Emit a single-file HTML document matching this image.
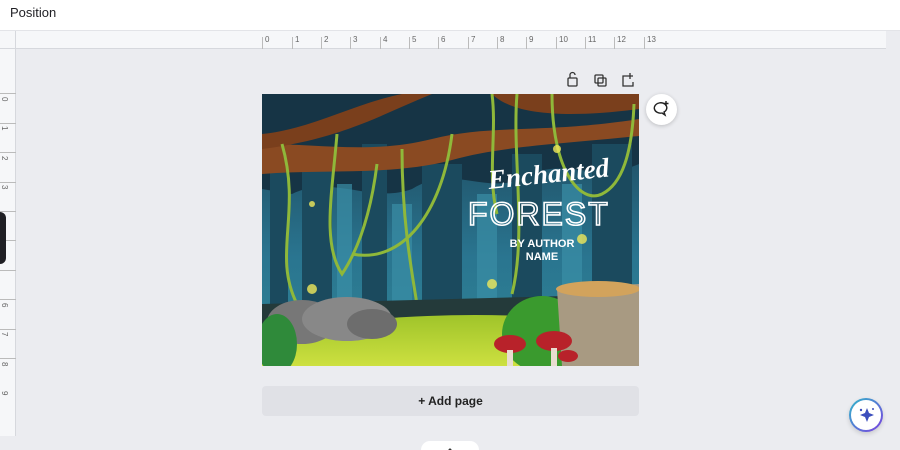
<!DOCTYPE html>
<html style="width:900px;height:450px;overflow:hidden"><head><style>
*{margin:0;padding:0;box-sizing:border-box}
body{width:900px;height:450px;overflow:hidden;background:#ebecf0;font-family:"Liberation Sans",sans-serif;position:relative}
.top{position:absolute;left:0;top:0;width:900px;height:31px;background:#fff;border-bottom:1px solid #e3e4e8}
.top span{position:absolute;left:10px;top:5px;font-size:13px;color:#1f1f24}
.rt{position:absolute;left:0;top:31px;width:886px;height:18px;background:#f6f7f9;border-bottom:1px solid #d6d8dd}
.rl{position:absolute;left:0;top:49px;width:16px;height:387px;background:#f6f7f9;border-right:1px solid #d6d8dd}
.btn{position:absolute;left:262px;top:386px;width:377px;height:30px;background:#e0e1e6;border-radius:4px;font-size:12px;color:#222;text-align:center;line-height:30px;font-weight:bold}
</style></head><body>
<div class="top"><span>Position</span></div>
<div class="rt">
<div style="position:absolute;left:0;top:0;width:16px;height:18px;border-right:1px solid #d6d8dd"></div>
<svg width="900" height="18" style="position:absolute;left:0;top:0">
<g stroke="#bbb" stroke-width="1">
<line x1="262.5" y1="6" x2="262.5" y2="18"/><line x1="292.5" y1="6" x2="292.5" y2="18"/><line x1="321.5" y1="6" x2="321.5" y2="18"/><line x1="350.5" y1="6" x2="350.5" y2="18"/><line x1="380.5" y1="6" x2="380.5" y2="18"/><line x1="409.5" y1="6" x2="409.5" y2="18"/><line x1="438.5" y1="6" x2="438.5" y2="18"/><line x1="468.5" y1="6" x2="468.5" y2="18"/><line x1="497.5" y1="6" x2="497.5" y2="18"/><line x1="526.5" y1="6" x2="526.5" y2="18"/><line x1="556.5" y1="6" x2="556.5" y2="18"/><line x1="585.5" y1="6" x2="585.5" y2="18"/><line x1="614.5" y1="6" x2="614.5" y2="18"/><line x1="644.5" y1="6" x2="644.5" y2="18"/>
</g>
<g fill="#666" font-size="8" font-family="Liberation Sans">
<text x="265" y="11">0</text><text x="295" y="11">1</text><text x="324" y="11">2</text><text x="353" y="11">3</text><text x="383" y="11">4</text><text x="412" y="11">5</text><text x="441" y="11">6</text><text x="471" y="11">7</text><text x="500" y="11">8</text><text x="529" y="11">9</text><text x="559" y="11">10</text><text x="588" y="11">11</text><text x="617" y="11">12</text><text x="647" y="11">13</text>
</g></svg>
</div>
<div class="rl">
<svg width="16" height="387" style="position:absolute;left:0;top:0">
<g stroke="#bbb"><line x1="0" y1="44.5" x2="16" y2="44.5"/><line x1="0" y1="74.5" x2="16" y2="74.5"/><line x1="0" y1="103.5" x2="16" y2="103.5"/><line x1="0" y1="133.5" x2="16" y2="133.5"/><line x1="0" y1="162.5" x2="16" y2="162.5"/><line x1="0" y1="191.5" x2="16" y2="191.5"/><line x1="0" y1="221.5" x2="16" y2="221.5"/><line x1="0" y1="250.5" x2="16" y2="250.5"/><line x1="0" y1="280.5" x2="16" y2="280.5"/><line x1="0" y1="309.5" x2="16" y2="309.5"/></g>
<g fill="#666" font-size="8" font-family="Liberation Sans">
<text transform="translate(2,48) rotate(90)">0</text><text transform="translate(2,77) rotate(90)">1</text><text transform="translate(2,107) rotate(90)">2</text><text transform="translate(2,136) rotate(90)">3</text><text transform="translate(2,254) rotate(90)">6</text><text transform="translate(2,283) rotate(90)">7</text><text transform="translate(2,313) rotate(90)">8</text><text transform="translate(2,342) rotate(90)">9</text>
</g></svg>
</div>
<div style="position:absolute;left:0;top:212px;width:6px;height:52px;background:#1f1f24;border-radius:0 6px 6px 0"></div>
<svg width="80" height="20" style="position:absolute;left:563px;top:70px" fill="none" stroke="#333" stroke-width="1.3">
<rect x="5" y="8" width="9" height="8" rx="1"/><path d="M7 8V5a2.5 2.5 0 0 1 5 0"/>
<rect x="32" y="5" width="8" height="8" rx="1"/><rect x="35" y="8" width="8" height="8" rx="1"/>
<path d="M64 6h-4v10h10v-4M67 3v6M64 6h6"/>
</svg>
<div style="position:absolute;left:646px;top:94px;width:31px;height:31px;border-radius:50%;background:#fff;box-shadow:0 1px 4px rgba(0,0,0,.2)">
<svg width="31" height="31" fill="none" stroke="#222" stroke-width="1.4"><path d="M13 9a6 5 0 1 0 3 10l3 2-1-3a6 5 0 0 0 -5-9z"/><path d="M20 7v5M17.5 9.5h5"/></svg></div>
<svg width="377" height="272" viewBox="0 0 377 272" style="position:absolute;left:262px;top:94px">
<defs><linearGradient id="bg" x1="0" y1="0" x2="0" y2="1"><stop offset="0" stop-color="#1a3f52"/><stop offset="0.6" stop-color="#2a7590"/><stop offset="1" stop-color="#2f8595"/></linearGradient>
<linearGradient id="gr" x1="0" y1="0" x2="0" y2="1"><stop offset="0" stop-color="#9fc42a"/><stop offset="1" stop-color="#cde040"/></linearGradient></defs>
<rect width="377" height="272" fill="url(#bg)"/>
<path d="M0 0H377V70C330 90 300 60 260 85 C220 100 190 70 150 95 C110 110 70 80 30 100 L0 95Z" fill="#163445"/>
<g fill="#1b4a5e"><rect x="40" y="60" width="30" height="170"/><rect x="100" y="50" width="25" height="190"/><rect x="160" y="70" width="40" height="160"/><rect x="250" y="60" width="30" height="170"/><rect x="330" y="50" width="40" height="180"/><rect x="8" y="70" width="18" height="160"/></g>
<g fill="#3a8ea6" opacity=".7"><rect x="75" y="90" width="15" height="140"/><rect x="215" y="100" width="20" height="130"/><rect x="300" y="90" width="20" height="140"/><rect x="130" y="110" width="20" height="120"/></g>
<path d="M0 50 C60 50 110 60 170 45 C230 30 280 40 377 25 L377 42 C300 50 240 52 190 66 C130 82 60 75 0 80Z" fill="#8a4a22"/>
<path d="M0 40 C50 35 90 10 140 0 L170 0 C120 20 80 45 0 55Z" fill="#7a3f1c"/>
<path d="M230 0 C250 20 300 25 377 15 L377 0Z" fill="#7a3f1c"/>
<g fill="none" stroke="#8fb83a" stroke-width="3">
<path d="M20 50 C40 120 10 160 35 210"/><path d="M75 40 C70 100 60 150 80 180 C100 150 110 110 115 70"/><path d="M190 40 C180 120 140 170 90 160"/><path d="M140 55 C140 130 150 180 160 240"/><path d="M255 0 C250 60 265 140 250 200"/><path d="M290 0 C290 80 320 110 340 100 C360 90 370 60 372 10"/><path d="M230 0 C235 40 225 80 235 120"/>
</g>
<path d="M0 210 L377 200 L377 272 L0 272Z" fill="#243a3a"/>
<path d="M0 240 C80 225 200 215 300 225 L377 240 L377 272 L0 272Z" fill="url(#gr)"/>
<ellipse cx="40" cy="228" rx="35" ry="22" fill="#777"/><ellipse cx="85" cy="225" rx="45" ry="22" fill="#888"/><ellipse cx="110" cy="230" rx="25" ry="15" fill="#6d6d6d"/>
<ellipse cx="15" cy="250" rx="20" ry="30" fill="#2f8a3a"/>
<ellipse cx="280" cy="240" rx="40" ry="38" fill="#3a9a2e"/>
<path d="M295 195 L377 190 L377 272 L300 272Z" fill="#a89a82"/><ellipse cx="336" cy="195" rx="42" ry="8" fill="#d2a35c"/>
<g fill="#b8222a"><ellipse cx="248" cy="250" rx="16" ry="9"/><ellipse cx="292" cy="247" rx="18" ry="10"/><ellipse cx="306" cy="262" rx="10" ry="6"/></g>
<g fill="#e8ddd0"><rect x="245" y="256" width="6" height="16"/><rect x="289" y="254" width="6" height="18"/></g>
<g fill="#f0e85a" opacity=".8"><circle cx="230" cy="190" r="5"/><circle cx="50" cy="195" r="5"/><circle cx="320" cy="145" r="5"/><circle cx="295" cy="55" r="4"/><circle cx="50" cy="110" r="3"/></g>
<text x="227" y="95" font-family="Liberation Serif" font-style="italic" font-weight="bold" font-size="27" fill="#fff" transform="rotate(-6 227 95)">Enchanted</text>
<text x="206" y="131" font-family="Liberation Sans" font-size="32" fill="none" stroke="#fff" stroke-width="1.6" letter-spacing="2">FOREST</text>
<text x="280" y="153" text-anchor="middle" font-weight="bold" font-size="11" fill="#fff" font-family="Liberation Sans">BY AUTHOR</text>
<text x="280" y="166" text-anchor="middle" font-weight="bold" font-size="11" fill="#fff" font-family="Liberation Sans">NAME</text>
</svg>
<div class="btn">+ Add page</div>
<div style="position:absolute;left:421px;top:441px;width:58px;height:9px;border-radius:10px 10px 0 0;background:#fff;overflow:hidden"><svg width="58" height="9"><path d="M26 7l3-3 3 3" fill="none" stroke="#333" stroke-width="1.3"/></svg></div>
<div style="position:absolute;left:849px;top:398px;width:34px;height:34px;border-radius:50%;background:linear-gradient(135deg,#2fb8c9,#7b3fe0);padding:2px;box-shadow:0 2px 5px rgba(0,0,0,.15)"><div style="width:30px;height:30px;border-radius:50%;background:#fff"><svg width="30" height="30"><path d="M16 8l2 5 5 2-5 2-2 5-2-5-5-2 5-2z" fill="#3d4fbd"/><circle cx="10" cy="10" r="1.2" fill="#3d4fbd"/><circle cx="22" cy="9" r="1" fill="#3d4fbd"/></svg></div></div>
</body></html>
